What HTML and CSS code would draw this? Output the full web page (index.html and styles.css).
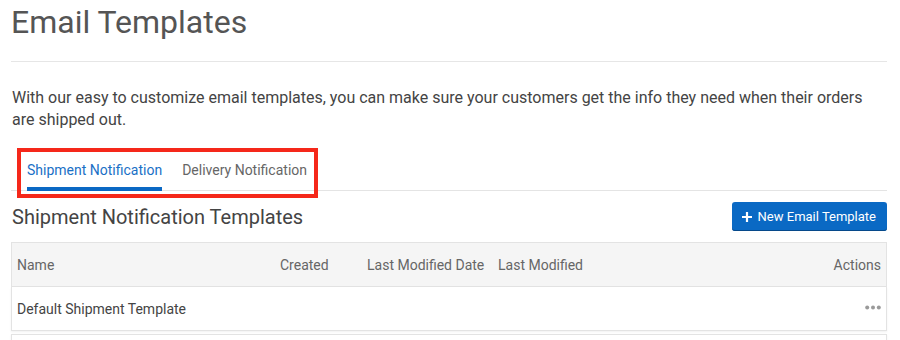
FILE: index.html
```html
<!DOCTYPE html>
<html lang="en">
<head>
  <meta charset="UTF-8">
  <title>Email Templates</title>
  <link rel="stylesheet" href="styles.css">
</head>
<body>
  <div class="page">
    <h1 class="page-title">Email Templates</h1>
    <p class="intro">With our easy to customize email templates, you can make sure your customers get the info they need when their orders are shipped out.</p>

    <div class="tabs">
      <div class="tab active">Shipment Notification</div>
      <div class="tab">Delivery Notification</div>
      <div class="highlight"></div>
    </div>

    <div class="section-head">
      <h2 class="section-title">Shipment Notification Templates</h2>
      <button class="btn-primary">
        <svg width="10" height="10" viewBox="0 0 10 10"><path d="M5 0v10M0 5h10" stroke="#fff" stroke-width="2.2"/></svg>
        New Email Template
      </button>
    </div>

    <div class="table">
      <div class="row head">
        <div class="cell">Name</div>
        <div class="cell">Created</div>
        <div class="cell">Last Modified Date</div>
        <div class="cell">Last Modified</div>
        <div class="cell right">Actions</div>
      </div>
      <div class="row">
        <div class="cell">Default Shipment Template</div>
        <div class="cell"></div>
        <div class="cell"></div>
        <div class="cell"></div>
        <div class="cell right">
          <svg class="dots" width="16" height="5" viewBox="0 0 16 5">
            <circle cx="2.2" cy="2.5" r="2" fill="#9a9a9a"/>
            <circle cx="8" cy="2.5" r="2" fill="#9a9a9a"/>
            <circle cx="13.8" cy="2.5" r="2" fill="#9a9a9a"/>
          </svg>
        </div>
      </div>
      <div class="row"></div>
    </div>
  </div>
</body>
</html>
```

FILE: styles.css
```css
body, html {
  margin: 0;
  background: #fff;
  overflow: hidden;
}

body {
  font-family: Roboto, "Liberation Sans", sans-serif;
  color: #444;
}

.page {
  margin: 0 13px 0 11px;
}

.page-title {
  margin: 0;
  padding-top: 2px;
  font-size: 32px;
  font-weight: 400;
  line-height: 40px;
  color: #555;
  padding-bottom: 19px;
  border-bottom: 1px solid #e6e6e6;
}

.intro {
  margin: 25px 0 0 1px;
  font-size: 16px;
  line-height: 22px;
  color: #444;
}

.tabs {
  position: relative;
  display: flex;
  gap: 20px;
  margin-top: 17px;
  padding-left: 16px;
  border-bottom: 1px solid #e4e4e4;
}

.tab {
  font-size: 14px;
  line-height: 20px;
  padding: 12px 0 7px;
  color: #666;
  border-bottom: 4px solid transparent;
  margin-bottom: -1px;
}

.tab.active {
  color: #1a70c6;
  border-bottom-color: #0a68c4;
}

/* annotation box drawn over the tabs */
.highlight {
  position: absolute;
  left: 6px;
  top: 0;
  width: 293px;
  height: 42px;
  border: 4px solid #f5281a;
}

.section-head {
  display: flex;
  justify-content: space-between;
  align-items: center;
  margin-top: 11px;
}

.section-title {
  margin: 0 0 0 1px;
  font-size: 20px;
  font-weight: 400;
  color: #444;
}

.btn-primary {
  display: flex;
  align-items: center;
  gap: 6px;
  height: 29px;
  padding: 0 11px 0 10px;
  border: none;
  border-radius: 3px;
  background: #0a69c4;
  box-shadow: inset 0 -1px 0 #06498a;
  color: #fff;
  font-family: inherit;
  font-size: 13px;
}

.table {
  margin-top: 11px;
}

.row {
  display: grid;
  grid-template-columns: 263px 87px 131px 1fr auto;
  align-items: center;
  height: 43px;
  padding: 0 5px;
  border: 1px solid #e3e3e3;
  border-top: none;
  background: #fff;
  box-shadow: 0 1px 2px rgba(0, 0, 0, 0.06);
  font-size: 14px;
  color: #444;
}

.row.head {
  height: 43px;
  border-top: 1px solid #e3e3e3;
  background: #f5f5f5;
  color: #666;
  box-shadow: none;
}

.row + .row + .row {
  margin-top: 3px;
  border-top: 1px solid #e3e3e3;
}

.cell {
  white-space: nowrap;
}

.right {
  text-align: right;
}

.dots {
  display: block;
  margin-left: auto;
  margin-top: -3px;
}
```
